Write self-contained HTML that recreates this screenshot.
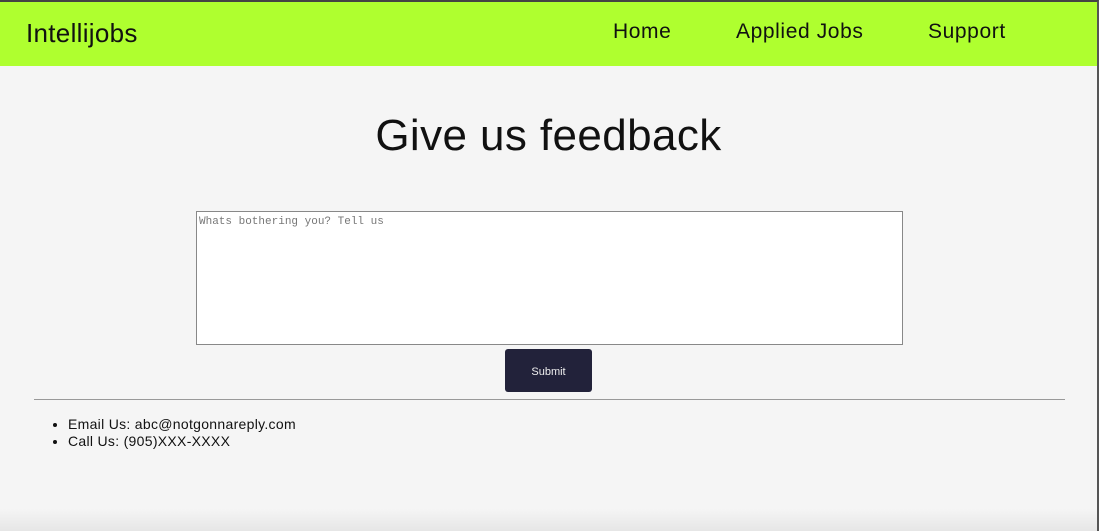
<!DOCTYPE html>
<html><head><style>
*{margin:0;padding:0;box-sizing:border-box}
html,body{width:1099px;height:531px;overflow:hidden}
body{background:#f5f5f5;font-family:"Liberation Sans",sans-serif;position:relative;border-top:2px solid #444;border-right:2px solid #555}
.hdr{position:absolute;left:0;top:0;width:1097px;height:64px;background:#afff2f}
.logo{position:absolute;left:26px;top:16px;font-size:26px;letter-spacing:0.3px;color:#111}
.nav{position:absolute;top:18px;font-size:21px;letter-spacing:0.6px;color:#111}
h1{position:absolute;left:0;width:1097px;top:109px;text-align:center;font-weight:normal;font-size:44px;letter-spacing:0.4px;color:#111}
.ta{position:absolute;left:196px;top:209px;width:707px;height:134px;background:#fff;border:1px solid #888;font-family:"Liberation Mono",monospace;font-size:11px;color:#777;padding:4px 2px}
.btn{position:absolute;left:505px;top:347px;width:87px;height:43px;background:#22223a;border-radius:3px;color:#eee;font-size:11px;text-align:center;line-height:46px}
.hr{position:absolute;left:34px;top:397px;width:1031px;height:1px;background:#999}
ul{position:absolute;left:68px;top:414px;font-size:14px;letter-spacing:0.3px;color:#111;line-height:17px}
.sh{position:absolute;left:0;bottom:0;width:1097px;height:22px;background:linear-gradient(#f5f5f5,#e6e6e6)}
</style></head><body>
<div class="hdr"><div class="logo">Intellijobs</div>
<div class="nav" style="left:613px">Home</div>
<div class="nav" style="left:736px">Applied Jobs</div>
<div class="nav" style="left:928px">Support</div></div>
<h1>Give us feedback</h1>
<div class="ta">Whats bothering you? Tell us</div>
<div class="btn">Submit</div>
<div class="hr"></div>
<ul><li>Email Us: abc@notgonnareply.com</li><li>Call Us: (905)XXX-XXXX</li></ul>
<div class="sh"></div>
</body></html>
